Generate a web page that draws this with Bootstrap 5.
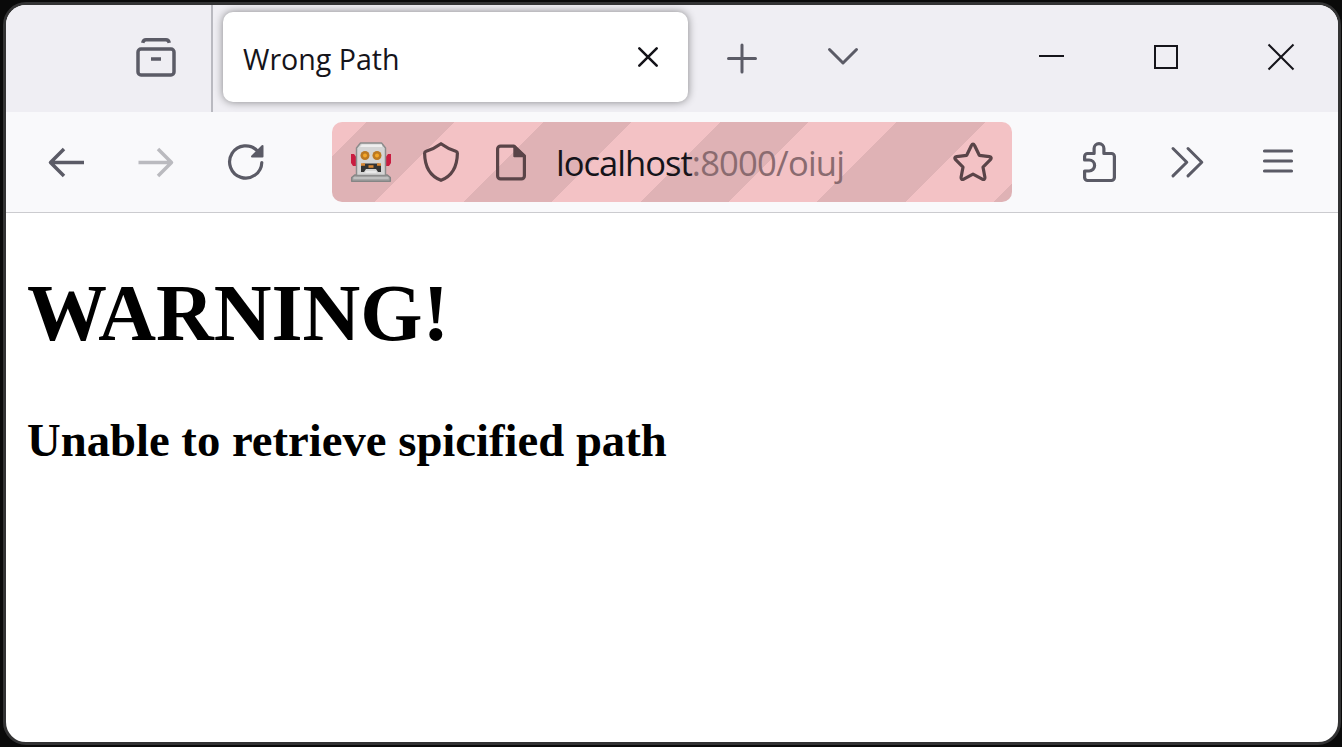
<!DOCTYPE html>
<html lang="en">
<head>
<meta charset="utf-8">
<meta name="viewport" content="width=device-width, initial-scale=1">
<title>Wrong Path</title>
<link href="https://cdn.jsdelivr.net/npm/bootstrap@5.3.0/dist/css/bootstrap.min.css" rel="stylesheet">
<style>
  body { background: #0a0a0a; padding: 2px 1px 2px 3px; font-family: "Open Sans", "Noto Sans", sans-serif; }
  .browser { border: 3px solid #333334; border-radius: 23px; background: #fff; }
  .tab-strip { height: 107px; background: #efeef3; color: #5b5b66; }
  .strip-divider { width: 2px; background: #b9b9c0; }
  .page-tab { width: 465px; height: 90px; margin: 7px 0 0 10px; border-radius: 10px; background: #fff; color: #15141a; box-shadow: 0 0 8px rgba(0,0,0,.45); padding-left: 20px; }
  .tab-title { font-size: 28.6px; line-height: 40px; padding-top: 3px; }
  .tool-row { height: 101px; background: #f9f9fb; border-bottom: 1px solid #cbcbcf; color: #5b5b66; padding: 0 14px 0 15px; }
  .address { width: 680px; height: 80px; margin-left: 41px; border-radius: 10px; color: #5a4448;
    background: repeating-linear-gradient(135deg, #f3c2c5 0 24.4px, #dfb2b5 24.4px 86.9px, #f3c2c5 86.9px 125px); }
  .url { font-size: 34.6px; line-height: 50px; letter-spacing: -.8px; color: #8a6b70; padding-top: 2px; }
  .url-host { color: #15141a; letter-spacing: -1px; }
  svg { display: block; flex: none; fill: none; stroke: currentColor; stroke-width: 3.5; stroke-linecap: round; stroke-linejoin: round; }
  .thin { stroke-width: 3; }
  .medium { stroke-width: 3.2; }
  .square-ends { stroke-linecap: butt; }
  .disabled-icon { color: #bababf; }
  .tab-close { stroke-width: 2.6; }
  .favicon { stroke: none; stroke-width: 1.5; }
  .window-controls { color: #15141a; }
  .window-controls svg { stroke-width: 2; stroke-linecap: butt; stroke-linejoin: miter; }
  .page-body { font-family: "Liberation Serif", serif; color: #000; padding: 54px 20px 0 21px; }
  .page-body h1 { font-size: 80px; line-height: 92px; margin: 0 0 54px; }
  .page-body h3 { font-size: 46.7px; line-height: 54px; margin: 0; }
</style>
</head>
<body class="vh-100 overflow-hidden">
<div class="browser h-100 overflow-hidden d-flex flex-column">
  <header class="tab-strip d-flex flex-shrink-0">
    <svg width="205" height="107" viewBox="6 5 205 107">
      <rect x="138" y="49" width="36" height="26" rx="3"/>
      <path class="square-ends" d="M142.700 42.800c.5-2 1.500-3 3.300-3h20c1.800 0 2.800 1 3.300 3"/>
      <path class="square-ends" d="M151 59h10"/>
    </svg>
    <div class="strip-divider"></div>
    <div class="page-tab d-flex align-items-center">
      <span class="tab-title text-nowrap">Wrong Path</span>
      <svg class="tab-close ms-auto" width="80" height="90" viewBox="608 12 80 90"><path d="M639.300 48.300l17.400 17.400M656.700 48.300l-17.400 17.400"/></svg>
    </div>
    <svg class="thin" width="105" height="107" viewBox="688 5 105 107"><path d="M728.500 58.500h27M742 45v27"/></svg>
    <svg class="thin" width="100" height="107" viewBox="793 5 100 107"><path d="M829.500 49.500L843 63l13.500-13.500"/></svg>
    <div class="window-controls d-flex ms-auto">
      <svg width="115" height="107" viewBox="993 5 115 107"><path d="M1039 56h25"/></svg>
      <svg width="115" height="107" viewBox="1108 5 115 107"><rect x="1155" y="46" width="22" height="22"/></svg>
      <svg width="115" height="107" viewBox="1223 5 115 107"><path d="M1268.500 44.500l25 25M1293.500 44.500l-25 25"/></svg>
    </div>
  </header>

  <nav class="tool-row d-flex align-items-center flex-shrink-0">
    <svg class="square-ends" width="90" height="100" viewBox="21 112 90 100"><path d="M84 162.500H50M64 149l-13.500 13.500L64 176"/></svg>
    <svg class="square-ends disabled-icon" width="90" height="100" viewBox="111 112 90 100"><path d="M138.500 162.500H172M158 149l13.500 13.500L158 176"/></svg>
    <svg class="medium" width="90" height="100" viewBox="201 112 90 100">
      <path d="M261.800 162.500A16.100 16.100 0 1 1 257.500 151"/>
      <path d="M262.500 146v10.500H252z" fill="currentColor" style="stroke-width:2"/>
    </svg>

    <div class="address d-flex align-items-center">
      <!-- robot favicon -->
      <svg class="favicon" width="74" height="80" viewBox="332 122 74 80">
        <path d="M351 154h3l3 4v8h-4l-2-3zM391 154h-3l-3 4v8h4l2-3z" fill="#c91c40"/>
        <path d="M351.700 181.200v-3.700l3-2.500h32.600l3 2.500v3.700z" fill="#a6a6a6" stroke="#858585"/>
        <path d="M356.500 175.500v-27.500l4-5h21l4 5v27.500z" fill="#d5d5d5" stroke="#8c8c8c"/>
        <path d="M360 147h22v-2.500h-20z" fill="#eee"/>
        <path d="M354 178h34" stroke="#c7c7c7"/>
        <circle cx="365" cy="155.500" r="4.500" fill="#bc7922"/><circle cx="377" cy="155.500" r="4.500" fill="#bc7922"/>
        <circle cx="365" cy="155.500" r="2" fill="#f3a72b"/><circle cx="377" cy="155.500" r="2" fill="#f3a72b"/>
        <path d="M361 172v-6.500l2-2h16l2 2v6.500h-3l-2-3h-10l-2 3z" fill="#343434"/>
        <path d="M361 164.500h4m3.500 2h5m3.500-2h4" stroke="#dd8a35" style="stroke-width:2.5" class="square-ends"/>
        <path d="M366 172h10" stroke="#eee"/>
      </svg>
      <svg class="medium" width="70" height="80" viewBox="406 122 70 80"><path d="M441 143.700c-4.500 3.300-9.800 6-14.800 7.500-1 .3-1.600 1-1.600 2 .2 13.800 5.400 22.800 16.400 27.100 11-4.300 16.200-13.300 16.400-27.100 0-1-.6-1.700-1.600-2-5-1.500-10.300-4.200-14.800-7.500z"/></svg>
      <svg class="medium" width="80" height="80" viewBox="476 122 80 80">
        <path d="M514 146.100h-13.400a3 3 0 0 0-3 3v26.800a3 3 0 0 0 3 3h20.800a3 3 0 0 0 3-3V156z"/>
        <path d="M514.300 146v10.300H524.500z" fill="currentColor" style="stroke-width:2"/>
      </svg>
      <span class="url text-nowrap"><span class="url-host">localhost</span>:8000/oiuj</span>
      <svg class="medium ms-auto" width="79" height="80" viewBox="933 122 79 80"><path d="M971.300 145.700q1.700-3 3.400 0l4.600 9.600 10.100 1.300q3 .7 1 3.100l-7.400 7.400 1.900 10.200q.2 3-2.600 1.900l-9.300-5-9.300 5q-2.800 1.100-2.600-1.900l1.900-10.200-7.400-7.400q-2-2.400 1-3.100l10.100-1.300z"/></svg>
    </div>

    <div class="d-flex ms-auto">
      <svg class="medium" width="90" height="100" viewBox="1054 112 90 100"><path d="M1084.600 160v-3.500a3 3 0 0 1 3-3h6.500v-5a4.900 4.900 0 0 1 9.800 0v5h7.500a3 3 0 0 1 3 3v21a3 3 0 0 1-3 3h-23.800a3 3 0 0 1-3-3v-6.500h4.500a5.200 5.200 0 0 0 0-11z"/></svg>
      <svg class="thin" width="90" height="100" viewBox="1144 112 90 100"><path d="M1173 148.500l13.800 13.700-13.800 13.700M1188 148.500l13.800 13.700-13.800 13.700"/></svg>
      <svg class="medium" width="90" height="100" viewBox="1234 112 90 100"><path d="M1264.500 151h27M1264.500 161h27M1264.500 171h27"/></svg>
    </div>
  </nav>

  <main class="page-body flex-grow-1">
    <h1 class="fw-bold">WARNING!</h1>
    <h3 class="fw-bold">Unable to retrieve spicified path</h3>
  </main>
</div>
<script src="https://cdn.jsdelivr.net/npm/bootstrap@5.3.0/dist/js/bootstrap.bundle.min.js"></script>
</body>
</html>
